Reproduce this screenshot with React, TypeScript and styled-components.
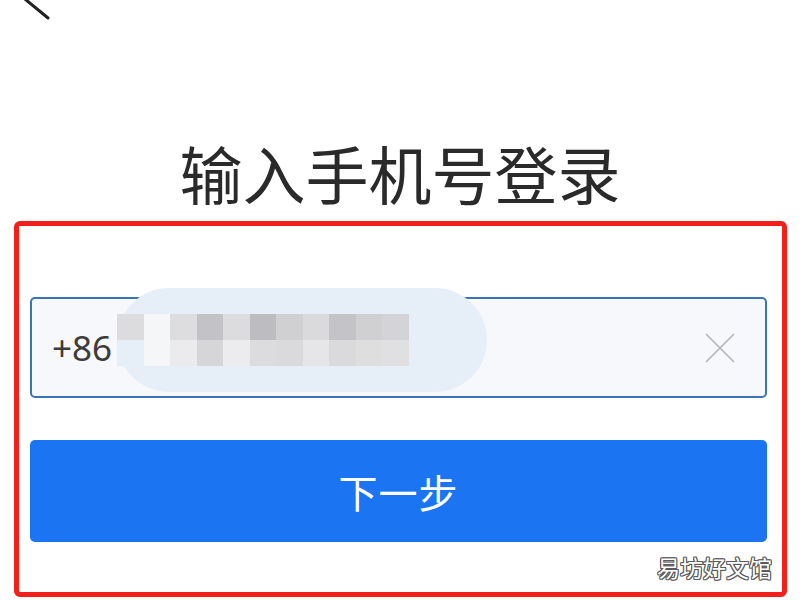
import styled, { createGlobalStyle } from 'styled-components';

const GlobalStyle = createGlobalStyle`
  html, body {
    margin: 0;
    padding: 0;
    background: #fff;
  }
  body {
    font-family: "Noto Sans", "Noto Sans CJK SC", sans-serif;
  }
`;

const Page = styled.div`
  width: 800px;
  height: 600px;
  overflow: hidden;
  display: flex;
  flex-direction: column;
  background: #fff;
`;

const TopBar = styled.div`
  height: 20px;
  padding-left: 24px;
  display: flex;
  align-items: flex-start;
`;

const Title = styled.h1`
  margin: 115px 0 0;
  font-family: "Noto Sans CJK SC", sans-serif;
  font-size: 63px;
  font-weight: 400;
  line-height: 74px;
  color: #2a2a2a;
  text-align: center;
  letter-spacing: 0;
`;

const Highlight = styled.div`
  margin: 12px 13px 0 14px;
  height: 376px;
  box-sizing: border-box;
  border: 5px solid #f21f1a;
  border-radius: 6px;
  padding: 71px 15px 0 11px;
  display: flex;
  flex-direction: column;
`;

const InputBox = styled.div`
  position: relative;
  height: 101px;
  box-sizing: border-box;
  border: 2px solid #3a74b4;
  border-radius: 5px;
  background: #f6f8fb;
  display: flex;
  align-items: center;
  padding: 0 30px 0 20px;
`;

const Prefix = styled.span`
  font-family: "Noto Sans", sans-serif;
  font-size: 35px;
  color: #3c3c3c;
`;

const Redaction = styled.div`
  position: absolute;
  left: 85px;
  top: -11px;
  width: 370px;
  height: 104px;
  border-radius: 52px;
  background: #e6eef7;
  display: flex;
  align-items: center;
`;

const PixelGrid = styled.div`
  margin-left: 0;
  display: grid;
  grid-template-columns: repeat(11, 26.5px);
  grid-template-rows: 26px 26px;
`;

const Pixel = styled.div<{ $shade: string }>`
  background: ${(p) => p.$shade};
`;

const ClearButton = styled.button`
  margin-left: auto;
  border: none;
  background: transparent;
  padding: 0;
  width: 30px;
  height: 30px;
  display: flex;
  cursor: pointer;
`;

const NextButton = styled.button`
  margin-top: 42px;
  height: 102px;
  border: none;
  border-radius: 5px;
  background: #1b75f2;
  color: #fff;
  font-family: "Noto Sans CJK SC", sans-serif;
  font-size: 39px;
  letter-spacing: 1px;
  cursor: pointer;
`;

const Footer = styled.div`
  flex: 1;
  display: flex;
  justify-content: flex-end;
  align-items: center;
  margin-right: -5px;
`;

const Watermark = styled.span`
  font-family: "Noto Sans CJK SC", sans-serif;
  font-size: 23px;
  color: #fff;
  text-shadow:
    1px 0 0 #5a5a5a,
    -1px 0 0 #5a5a5a,
    0 1px 0 #5a5a5a,
    0 -1px 0 #5a5a5a,
    1px 1px 0 #5a5a5a,
    -1px -1px 0 #5a5a5a,
    1px -1px 0 #5a5a5a,
    -1px 1px 0 #5a5a5a;
`;

const row1 = ['#dcdcde', '#f4f6f8', '#dddde0', '#c3c3c7', '#dcdcde', '#bdbdc1', '#d0d0d3', '#dadadd', '#c4c4c8', '#d0d0d3', '#d4d4d8'];
const row2 = ['#e6eef7', '#f4f6f8', '#ebebed', '#d6d6d8', '#ececee', '#dcdcde', '#dadadc', '#e6e6e8', '#dadadd', '#dededf', '#e0e0e2'];

export default function App() {
  return (
    <Page>
      <GlobalStyle />
      <TopBar>
        <svg width="30" height="20" viewBox="0 0 30 20">
          <line x1="1" y1="-1" x2="24" y2="18" stroke="#222" strokeWidth="3" strokeLinecap="round" />
        </svg>
      </TopBar>
      <Title>输入手机号登录</Title>
      <Highlight>
        <InputBox>
          <Prefix>+86</Prefix>
          <Redaction>
            <PixelGrid>
              {[...row1, ...row2].map((c, i) => (
                <Pixel key={i} $shade={c} />
              ))}
            </PixelGrid>
          </Redaction>
          <ClearButton aria-label="清除">
            <svg width="30" height="30" viewBox="0 0 30 30">
              <path d="M1 1 L29 29 M29 1 L1 29" stroke="#b4b4b4" strokeWidth="1.6" />
            </svg>
          </ClearButton>
        </InputBox>
        <NextButton>下一步</NextButton>
        <Footer>
          <Watermark>易坊好文馆</Watermark>
        </Footer>
      </Highlight>
    </Page>
  );
}
